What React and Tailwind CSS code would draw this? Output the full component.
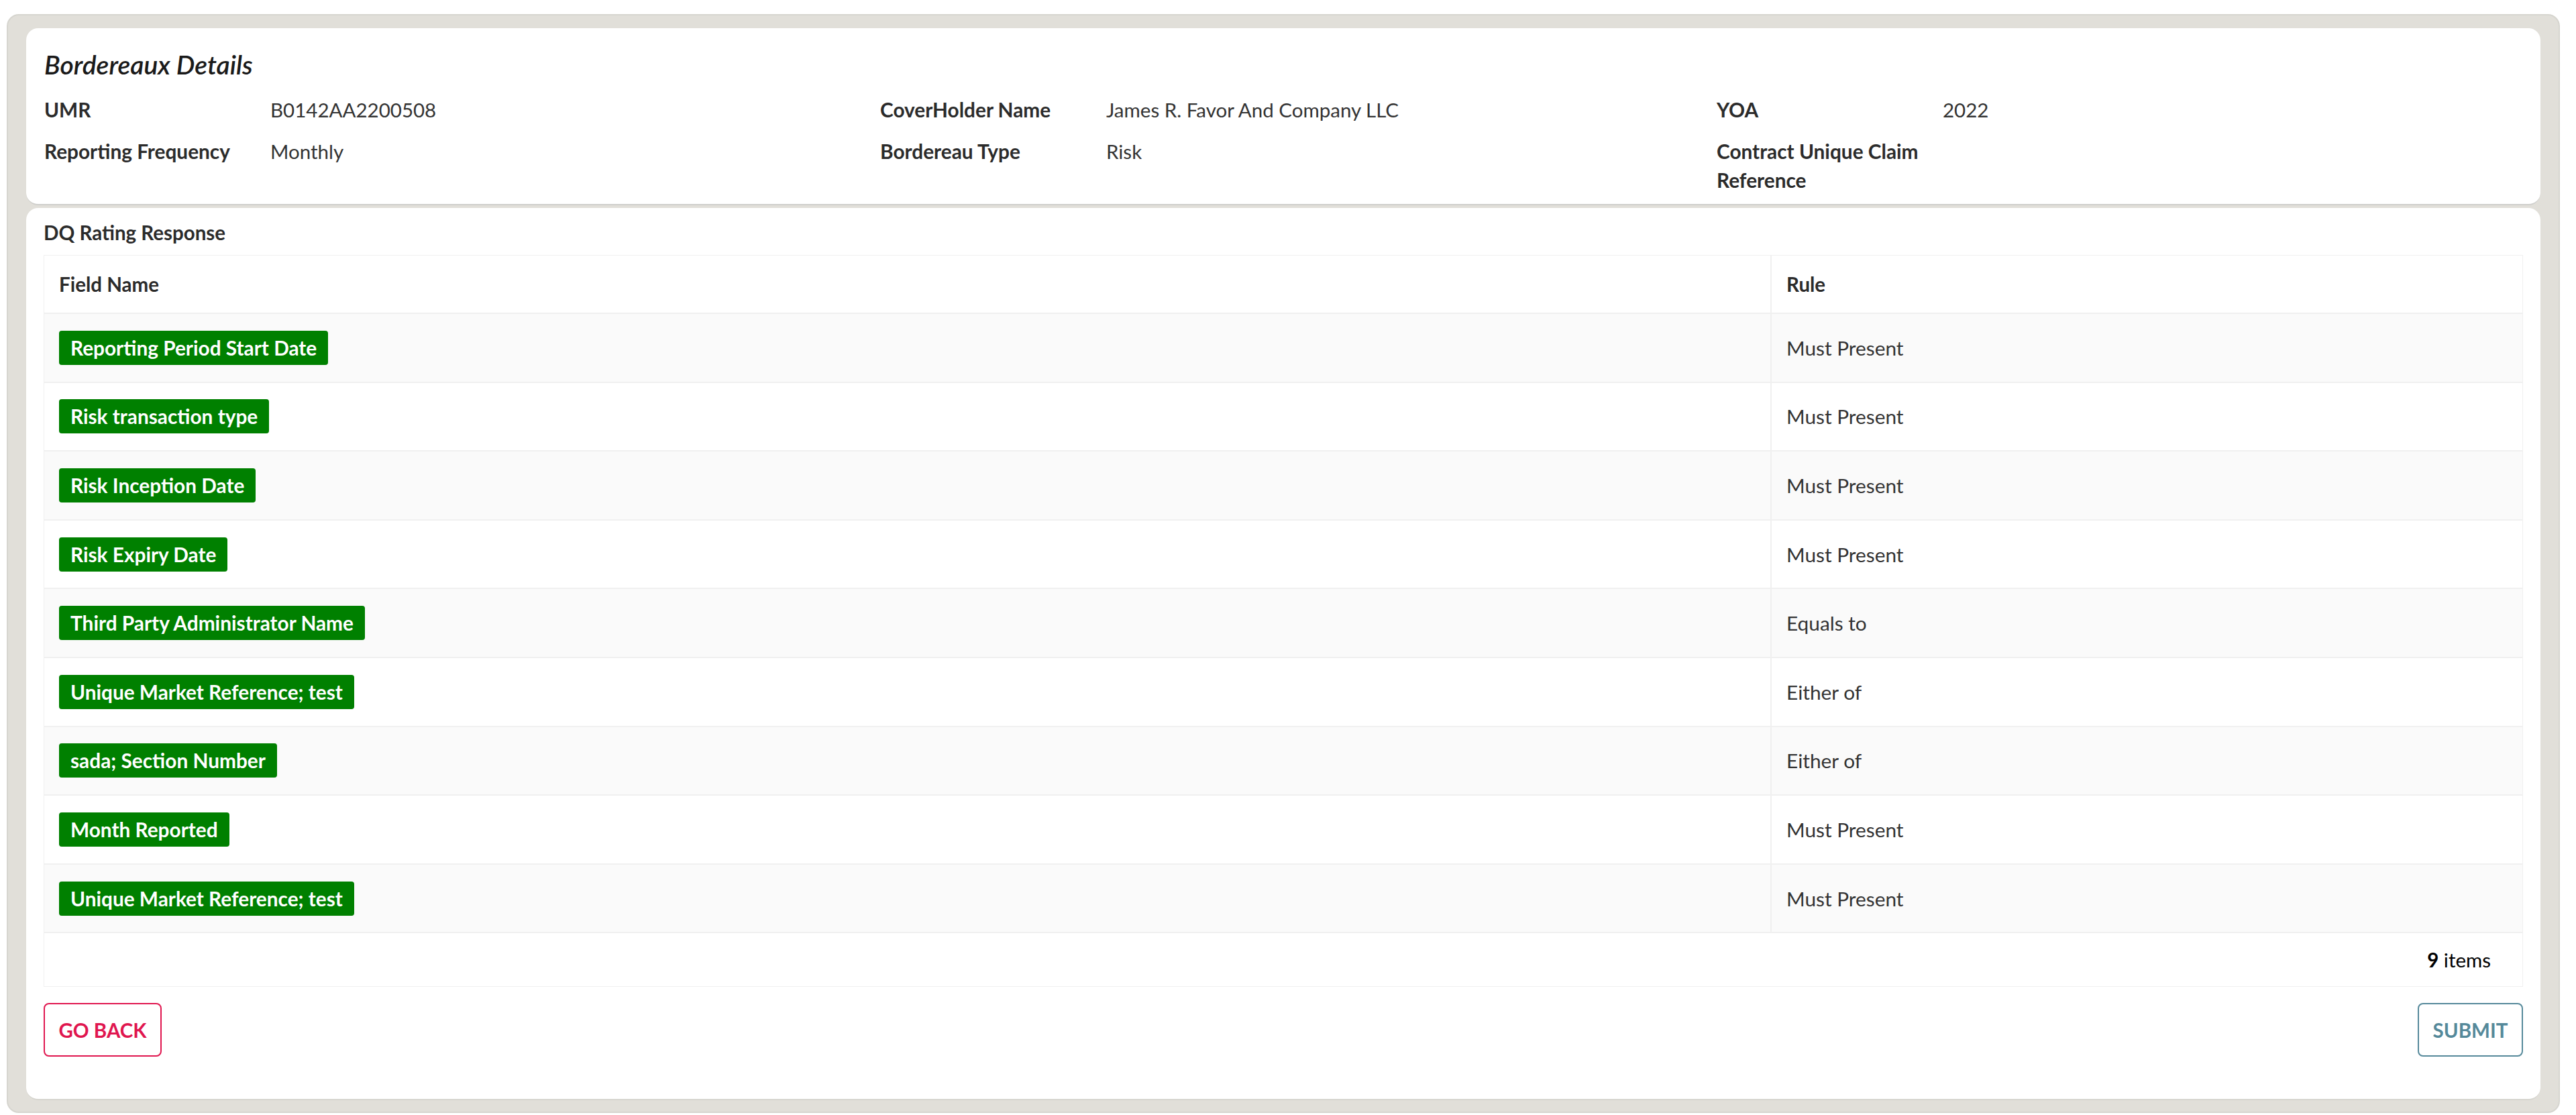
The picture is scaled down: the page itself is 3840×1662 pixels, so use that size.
import React from 'react'

const rows = [
  { field: "Reporting Period Start Date", rule: "Must Present" },
  { field: "Risk transaction type", rule: "Must Present" },
  { field: "Risk Inception Date", rule: "Must Present" },
  { field: "Risk Expiry Date", rule: "Must Present" },
  { field: "Third Party Administrator Name", rule: "Equals to" },
  { field: "Unique Market Reference; test", rule: "Either of" },
  { field: "sada; Section Number", rule: "Either of" },
  { field: "Month Reported", rule: "Must Present" },
  { field: "Unique Market Reference; test", rule: "Must Present" },
];

const Detail = ({ label, value }) => (
  <div className="flex items-start">
    <div className="w-[337px] shrink-0 pr-[6px] text-[29.8px] font-bold text-[#2b2b2b]">{label}</div>
    <div className="text-[#333333]">{value}</div>
  </div>
);

const App = () => {
  return (
    <div className="h-[1662px] w-full bg-white pt-[21px] pl-[10px] pr-[24px] font-['Lato',sans-serif] text-[29.5px] leading-[43px]">
      <div className="h-[1638px] rounded-[18px] border-2 border-[#d6d5cf] bg-[#e1dfd9] px-[27px] pt-[19px]">
        <section className="h-[264px] rounded-[18px] border-b-2 border-[#cfcfcc] bg-white pl-[27px] pt-[32px]">
          <h2 className="mb-[24px] text-[39px] leading-[44px] font-semibold italic text-[#1a1a1a]">Bordereaux Details</h2>
          <div className="grid grid-cols-[1246px_1247px_1fr] gap-y-[19px]">
            <Detail label="UMR" value="B0142AA2200508" />
            <Detail label="CoverHolder Name" value="James R. Favor And Company LLC" />
            <Detail label="YOA" value="2022" />
            <Detail label="Reporting Frequency" value="Monthly" />
            <Detail label="Bordereau Type" value="Risk" />
            <Detail label="Contract Unique Claim Reference" value="" />
          </div>
        </section>
        <section className="mt-[4px] h-[1330px] rounded-[18px] border-b-2 border-[#d6d5cf] bg-white px-[26px] pt-[15px]">
          <h3 className="mb-[12px] font-bold text-[#2b2b2b]">DQ Rating Response</h3>
          <div className="border border-[#f0f0f0]">
            <table className="w-full table-fixed border-collapse">
              <thead>
                <tr className="h-[86px] border-b-2 border-[#f0f0f0] text-left">
                  <th className="w-[2574px] border-r-2 border-[#f0f0f0] px-[22px] font-bold text-[#2b2b2b]">Field Name</th>
                  <th className="px-[22px] font-bold text-[#2b2b2b]">Rule</th>
                </tr>
              </thead>
              <tbody>
                {rows.map((row, i) => (
                  <tr key={i} className="h-[102.6px] border-b-2 border-[#f0f0f0] odd:bg-[#fafafa]">
                    <td className="border-r-2 border-[#f0f0f0] px-[22px]">
                      <span className="inline-block rounded-[4px] bg-[#008000] px-[17px] py-[4px] text-[29.8px] font-bold text-white">{row.field}</span>
                    </td>
                    <td className="px-[22px] text-[29.8px] text-[#333333]">{row.rule}</td>
                  </tr>
                ))}
              </tbody>
            </table>
            <div className="flex h-[79px] items-center justify-end pr-[47px] text-black">
              <span><b className="font-bold">9</b> items</span>
            </div>
          </div>
          <div className="mt-[24px] flex justify-between">
            <button className="h-[80px] w-[176px] rounded-[8px] border-2 border-[#e0164f] font-bold text-[#e0164f]">GO BACK</button>
            <button className="h-[80px] w-[157px] rounded-[8px] border-2 border-[#55899a] font-bold text-[#55899a]">SUBMIT</button>
          </div>
        </section>
      </div>
    </div>
  )
}

export default App
